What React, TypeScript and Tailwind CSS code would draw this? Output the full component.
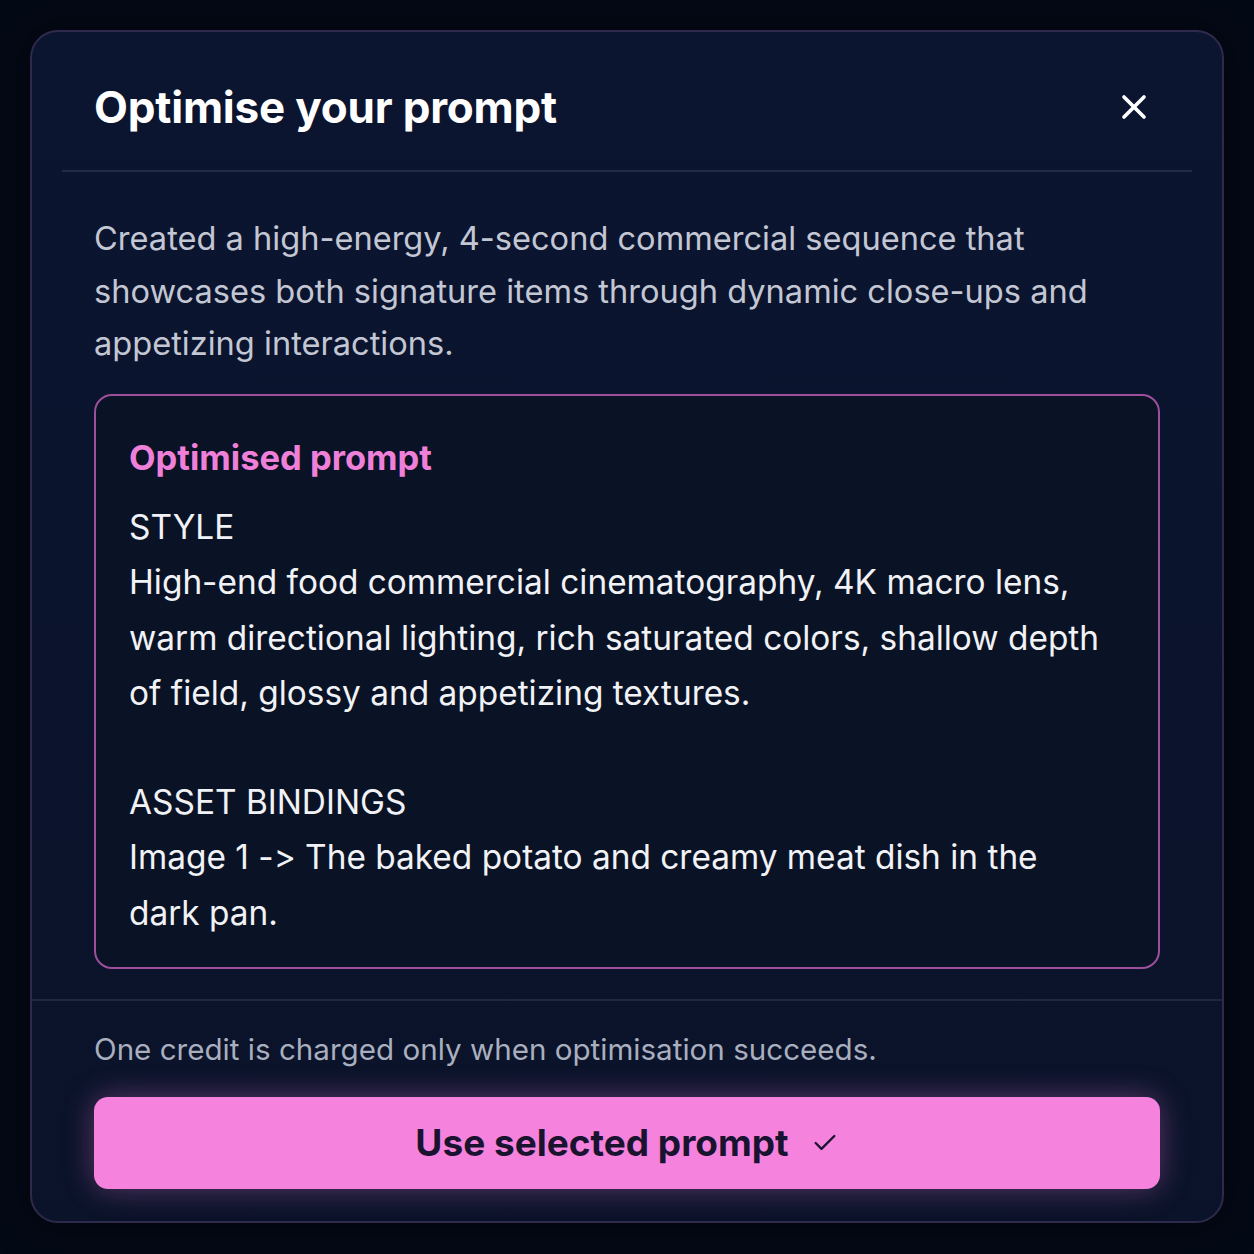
import { X, Check } from "lucide-react";

export default function App() {
  return (
    <div
      className="min-h-screen w-full bg-[#040916] p-[30px] [font-feature-settings:'calt'_0]"
      style={{ fontFamily: "Inter, 'Noto Sans', sans-serif" }}
    >
      <div className="flex flex-col rounded-[28px] border-2 border-[#2f2a4c] bg-gradient-to-b from-[#0c1530] to-[#0a1329] shadow-[0_0_40px_rgba(0,0,0,0.5)]">
        {/* header */}
        <div className="flex items-center justify-between pl-[62px] pr-[68px] pt-[50px] pb-[38px]">
          <h1 className="text-[44px] font-bold leading-[50px] tracking-[-0.2px] text-white">
            Optimise your prompt
          </h1>
          <button type="button" className="text-white">
            <X size={40} strokeWidth={2.2} />
          </button>
        </div>
        <div className="mx-[30px] h-[2px] bg-[#232b45]" />

        {/* body */}
        <div className="flex flex-col px-[62px] pt-[40px] pb-[30px]">
          <p className="text-[32.6px] leading-[52.5px] text-[#c3c7d3]">
            Created a high-energy, 4-second commercial sequence that showcases
            both signature items through dynamic close-ups and appetizing
            interactions.
          </p>
          <div className="mt-[24px] rounded-[18px] border-2 border-[#9c4f9b] bg-[#0a1225] pl-[33px] pr-[52px] pt-[40px] pb-[26px]">
            <h2 className="text-[34.5px] font-bold leading-[44px] text-[#ef80da]">
              Optimised prompt
            </h2>
            <div className="mt-[20px] text-[33.4px] leading-[55.5px] text-[#f1f2f6]">
              <p>STYLE</p>
              <p>
                High-end food commercial cinematography, 4K macro lens, warm
                directional lighting, rich saturated colors, shallow depth of
                field, glossy and appetizing textures.
              </p>
              <p className="h-[53px]" />
              <p>ASSET BINDINGS</p>
              <p>
                Image 1 -&gt; The baked potato and creamy meat dish in the dark
                pan.
              </p>
            </div>
          </div>
        </div>
        <div className="h-[2px] bg-[#1f2741]" />

        {/* footer */}
        <div className="flex flex-col px-[62px] pt-[28px] pb-[32px]">
          <p className="text-[29.6px] leading-[40px] text-[#a9afbf]">
            One credit is charged only when optimisation succeeds.
          </p>
          <button
            type="button"
            className="mt-[28px] flex h-[92px] items-center justify-center gap-[22px] rounded-[14px] bg-[#f583de] text-[#1a1330] shadow-[0_0_30px_rgba(245,120,220,0.35)]"
          >
            <span className="text-[37px] font-bold">Use selected prompt</span>
            <Check size={28} strokeWidth={2} />
          </button>
        </div>
      </div>
    </div>
  );
}
